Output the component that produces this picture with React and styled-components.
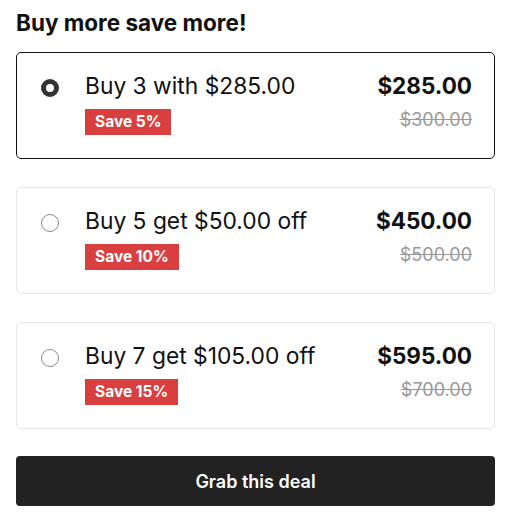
import React, { useState } from "react";
import styled, { createGlobalStyle } from "styled-components";

const Global = createGlobalStyle`
  html, body { margin: 0; padding: 0; background: #fff; }
  body { font-family: Inter, "Noto Sans", sans-serif; color: #111; }
  * { box-sizing: border-box; }
`;

const Wrap = styled.div`
  width: 509px;
  padding: 8px 14px 0 16px;
  display: flex;
  flex-direction: column;
`;

const Title = styled.h2`
  margin: 0 0 14px;
  font-size: 22.5px;
  line-height: 30px;
  font-weight: 700;
  color: #111;
`;

const List = styled.div`
  display: flex;
  flex-direction: column;
  gap: 28px;
`;

const Card = styled.label`
  display: flex;
  align-items: flex-start;
  height: 107px;
  padding: 18px 22px 0 24px;
  border: 1px solid ${(p) => (p.$active ? "#111" : "#e6e6e6")};
  border-radius: 5px;
  cursor: pointer;
`;

const Radio = styled.span`
  flex: none;
  width: 18px;
  height: 18px;
  margin-top: 8px;
  margin-right: 26px;
  border-radius: 50%;
  border: ${(p) => (p.$checked ? "5px solid #333" : "1px solid #8a8a8a")};
  background: #fff;
`;

const Info = styled.div`
  flex: 1;
  display: flex;
  flex-direction: column;
  align-items: flex-start;
  gap: 8px;
`;

const Name = styled.div`
  font-size: 22.8px;
  line-height: 30px;
  font-weight: 400;
  color: #111;
`;

const Badge = styled.span`
  display: inline-block;
  background: #d93f3f;
  color: #fff;
  font-size: 15.5px;
  font-weight: 700;
  line-height: 26px;
  padding: 0 10px;
`;

const Prices = styled.div`
  display: flex;
  flex-direction: column;
  align-items: flex-end;
  gap: 7px;
`;

const Price = styled.div`
  font-size: 22.5px;
  line-height: 30px;
  font-weight: 700;
  color: #111;
`;

const Compare = styled.s`
  font-size: 18px;
  line-height: 24px;
  color: #999;
`;

const Button = styled.button`
  margin-top: 27px;
  height: 50px;
  border: none;
  border-radius: 4px;
  background: #222;
  color: #fff;
  font-family: Inter, "Noto Sans", sans-serif;
  font-size: 18px;
  font-weight: 600;
  cursor: pointer;
`;

const offers = [
  { name: "Buy 3 with $285.00", badge: "Save 5%", price: "$285.00", compare: "$300.00" },
  { name: "Buy 5 get $50.00 off", badge: "Save 10%", price: "$450.00", compare: "$500.00" },
  { name: "Buy 7 get $105.00 off", badge: "Save 15%", price: "$595.00", compare: "$700.00" },
];

export default function App() {
  const [sel, setSel] = useState(0);
  return (
    <>
      <Global />
      <Wrap>
        <Title>Buy more save more!</Title>
        <List>
          {offers.map((o, i) => (
            <Card key={i} $active={sel === i} onClick={() => setSel(i)}>
              <Radio $checked={sel === i} />
              <Info>
                <Name>{o.name}</Name>
                <Badge>{o.badge}</Badge>
              </Info>
              <Prices>
                <Price>{o.price}</Price>
                <Compare>{o.compare}</Compare>
              </Prices>
            </Card>
          ))}
        </List>
        <Button>Grab this deal</Button>
      </Wrap>
    </>
  );
}
